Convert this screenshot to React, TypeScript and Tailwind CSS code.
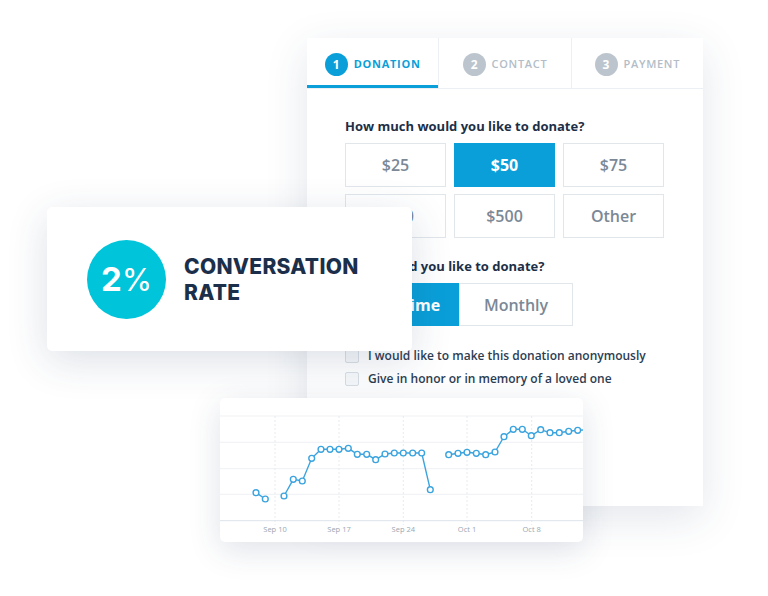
import React from "react";

type Pt = [number, number];

const segments: Pt[][] = [
  [
    [36, 94.7],
    [45.3, 101],
  ],
  [
    [64, 98],
    [73.3, 81.3],
    [82.3, 83],
    [91.7, 60.3],
    [101, 51.3],
    [110, 51.3],
    [119, 51.3],
    [128.3, 50.3],
    [137.3, 56.3],
    [146.7, 56.3],
    [155.7, 61.7],
    [165, 56],
    [174.3, 55],
    [183.3, 55],
    [192.7, 55],
    [201.7, 55],
    [210.3, 91.7],
  ],
  [
    [228.7, 56.7],
    [238, 55.3],
    [247, 54.3],
    [256.3, 55.3],
    [265.7, 56.7],
    [275, 54],
    [284, 38.7],
    [293.3, 31.3],
    [302.3, 31.3],
    [311.3, 37.7],
    [320.7, 31.7],
    [330, 34.7],
    [339.3, 34.7],
    [348.7, 33.3],
    [357.7, 32.3],
  ],
];

const xTicks = [
  { x: 55, label: "Sep 10" },
  { x: 119, label: "Sep 17" },
  { x: 183.3, label: "Sep 24" },
  { x: 247, label: "Oct 1" },
  { x: 311.7, label: "Oct 8" },
];

const gridY = [18, 44.3, 70.7, 96.3];

function Chart() {
  return (
    <svg width="363" height="144" viewBox="0 0 363 144" className="block">
      {gridY.map((y) => (
        <line key={y} x1="0" x2="363" y1={y} y2={y} stroke="#eef1f5" strokeWidth="1" />
      ))}
      {xTicks.map((t) => (
        <line
          key={t.x}
          x1={t.x}
          x2={t.x}
          y1="18"
          y2="127"
          stroke="#e6eaef"
          strokeWidth="1"
          strokeDasharray="2 2"
        />
      ))}
      <line x1="0" x2="363" y1="122.7" y2="122.7" stroke="#dde3ea" strokeWidth="1" />
      {xTicks.map((t) => (
        <text
          key={t.label}
          x={t.x}
          y="134"
          textAnchor="middle"
          fontSize="7.5"
          fill="#9aa7b4"
          fontFamily="'Open Sans', sans-serif"
        >
          {t.label}
        </text>
      ))}
      {segments.map((seg, i) => (
        <polyline
          key={i}
          points={(i === 2 ? [...seg, [363, 32] as Pt] : seg).map((p) => p.join(",")).join(" ")}
          fill="none"
          stroke="#3ba4df"
          strokeWidth="1.4"
        />
      ))}
      {segments.flat().map((p, i) => (
        <circle key={i} cx={p[0]} cy={p[1]} r="2.9" fill="#fff" stroke="#3ba4df" strokeWidth="1.4" />
      ))}
    </svg>
  );
}

function Tab({ n, label, active }: { n: number; label: string; active?: boolean }) {
  return (
    <div
      className={
        active
          ? "flex-1 flex items-center justify-center gap-[6px] border-b-[3px] border-[#0a9fd9] pt-[6px]"
          : "flex-1 flex items-center justify-center gap-[6px] border-l border-[#eceff3] pt-[3px]"
      }
    >
      <span
        className={
          active
            ? "w-[23px] h-[23px] rounded-full bg-[#0a9fd9] text-white text-[12px] font-bold flex items-center justify-center"
            : "w-[23px] h-[23px] rounded-full bg-[#bcc5ce] text-white text-[12px] font-bold flex items-center justify-center"
        }
      >
        {n}
      </span>
      <span
        className={
          active
            ? "text-[11px] font-bold tracking-[0.7px] text-[#0a9fd9]"
            : "text-[11px] font-semibold tracking-[0.7px] text-[#b3bdc7]"
        }
      >
        {label}
      </span>
    </div>
  );
}

function Amount({ label, active }: { label: string; active?: boolean }) {
  return (
    <div
      className={
        active
          ? "h-[44px] flex items-center justify-center bg-[#0a9fd9] text-white text-[16px] font-bold"
          : "h-[44px] flex items-center justify-center border border-[#e1e6eb] text-[#7b8896] text-[16px] font-semibold"
      }
    >
      {label}
    </div>
  );
}

function Check({ label }: { label: string }) {
  return (
    <div className="flex items-center gap-[9px] h-[16px]">
      <span className="w-[14px] h-[14px] rounded-[2px] border border-[#d9dfe5] bg-[#f7f9fb]" />
      <span className="text-[12px] font-semibold text-[#2d3d52]">{label}</span>
    </div>
  );
}

export default function App() {
  return (
    <div
      className="relative w-[768px] h-[596px] overflow-hidden bg-white"
      style={{ fontFamily: "'Open Sans', 'Liberation Sans', sans-serif" }}
    >
      {/* Donation form */}
      <div className="absolute left-[307px] top-[38px] w-[396px] h-[468px] bg-white shadow-[0_12px_40px_rgba(40,60,100,0.13)] flex flex-col">
        <div className="h-[51px] flex border-b border-[#eceff3]">
          <Tab n={1} label="DONATION" active />
          <Tab n={2} label="CONTACT" />
          <Tab n={3} label="PAYMENT" />
        </div>
        <div className="px-[38px] pt-[28px] flex flex-col">
          <div className="text-[13px] leading-[18px] font-bold text-[#1d2f47]">
            How much would you like to donate?
          </div>
          <div className="mt-[8px] grid grid-cols-[101px_101px_101px] gap-x-[8px] gap-y-[7px]">
            <Amount label="$25" />
            <Amount label="$50" active />
            <Amount label="$75" />
            <Amount label="$250" />
            <Amount label="$500" />
            <Amount label="Other" />
          </div>
          <div className="mt-[19px] text-[13px] leading-[18px] font-bold text-[#1d2f47]">
            How would you like to donate?
          </div>
          <div className="mt-[8px] flex">
            <div className="w-[114px] h-[43px] flex items-center justify-center bg-[#0a9fd9] text-white text-[16px] font-bold">
              One Time
            </div>
            <div className="w-[114px] h-[43px] flex items-center justify-center border border-[#e1e6eb] text-[#7b8896] text-[16px] font-semibold">
              Monthly
            </div>
          </div>
          <div className="mt-[22px] flex flex-col gap-[7px]">
            <Check label="I would like to make this donation anonymously" />
            <Check label="Give in honor or in memory of a loved one" />
          </div>
        </div>
      </div>

      {/* Conversion stat */}
      <div className="absolute left-[47px] top-[207px] w-[365px] h-[144px] rounded-[5px] bg-white shadow-[0_10px_40px_rgba(40,60,100,0.16)] flex items-center pl-[40px] gap-[18px]">
        <div className="w-[79px] h-[79px] rounded-full bg-[#00c4d9] flex items-center justify-center text-white">
          <span className="text-[33px] font-bold leading-none" style={{ fontFamily: "Inter, sans-serif" }}>
            2
          </span>
          <span className="text-[31px] font-normal leading-none" style={{ fontFamily: "Inter, sans-serif" }}>
            %
          </span>
        </div>
        <div
          className="text-[21px] leading-[26px] font-extrabold tracking-[0.3px] text-[#1c2f4a] pt-[1px]"
          style={{ fontFamily: "Inter, sans-serif" }}
        >
          CONVERSATION
          <br />
          RATE
        </div>
      </div>

      {/* Chart */}
      <div className="absolute left-[220px] top-[398px] w-[363px] h-[144px] rounded-[5px] bg-white overflow-hidden shadow-[0_8px_32px_rgba(40,60,100,0.15)]">
        <Chart />
      </div>
    </div>
  );
}
